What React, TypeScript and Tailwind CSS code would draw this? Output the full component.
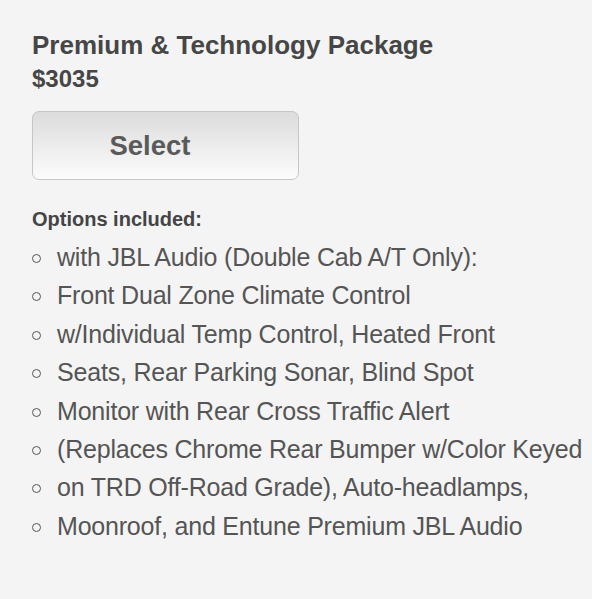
const options = [
  "with JBL Audio (Double Cab A/T Only):",
  "Front Dual Zone Climate Control",
  "w/Individual Temp Control, Heated Front",
  "Seats, Rear Parking Sonar, Blind Spot",
  "Monitor with Rear Cross Traffic Alert",
  "(Replaces Chrome Rear Bumper w/Color Keyed",
  "on TRD Off-Road Grade), Auto-headlamps,",
  "Moonroof, and Entune Premium JBL Audio",
];

export default function App() {
  return (
    <div
      className="w-[592px] h-[599px] overflow-hidden bg-[#f4f4f4] px-8 pt-[30px]"
      style={{ fontFamily: '"Liberation Sans", Arial, sans-serif' }}
    >
      <h1 className="text-[26px] leading-[30px] font-bold text-[#464646]">
        Premium &amp; Technology Package
      </h1>
      <div className="mt-[5px] text-[24px] leading-[28px] font-bold text-[#464646]">$3035</div>

      <button className="block mt-[18px] w-[267px] h-[69px] rounded-[7px] border border-[#c6c6c6] bg-gradient-to-b from-[#dcdcdc] to-[#fcfcfc] pr-[31px] text-[27.5px] font-bold text-[#5a5a5a]">
        Select
      </button>

      <div className="mt-[27px] text-[20px] leading-[24px] font-bold text-[#444]">
        Options included:
      </div>

      <ul className="mt-[7px]">
        {options.map((o) => (
          <li key={o} className="flex items-start h-[38.4px] leading-[38.4px] text-[25px] tracking-[-0.2px] text-[#555]">
            <span className="mt-[16px] w-[9px] h-[9px] rounded-full border-[1.5px] border-[#555] mr-[16px] shrink-0" />
            <span className="whitespace-nowrap">{o}</span>
          </li>
        ))}
      </ul>
    </div>
  );
}
